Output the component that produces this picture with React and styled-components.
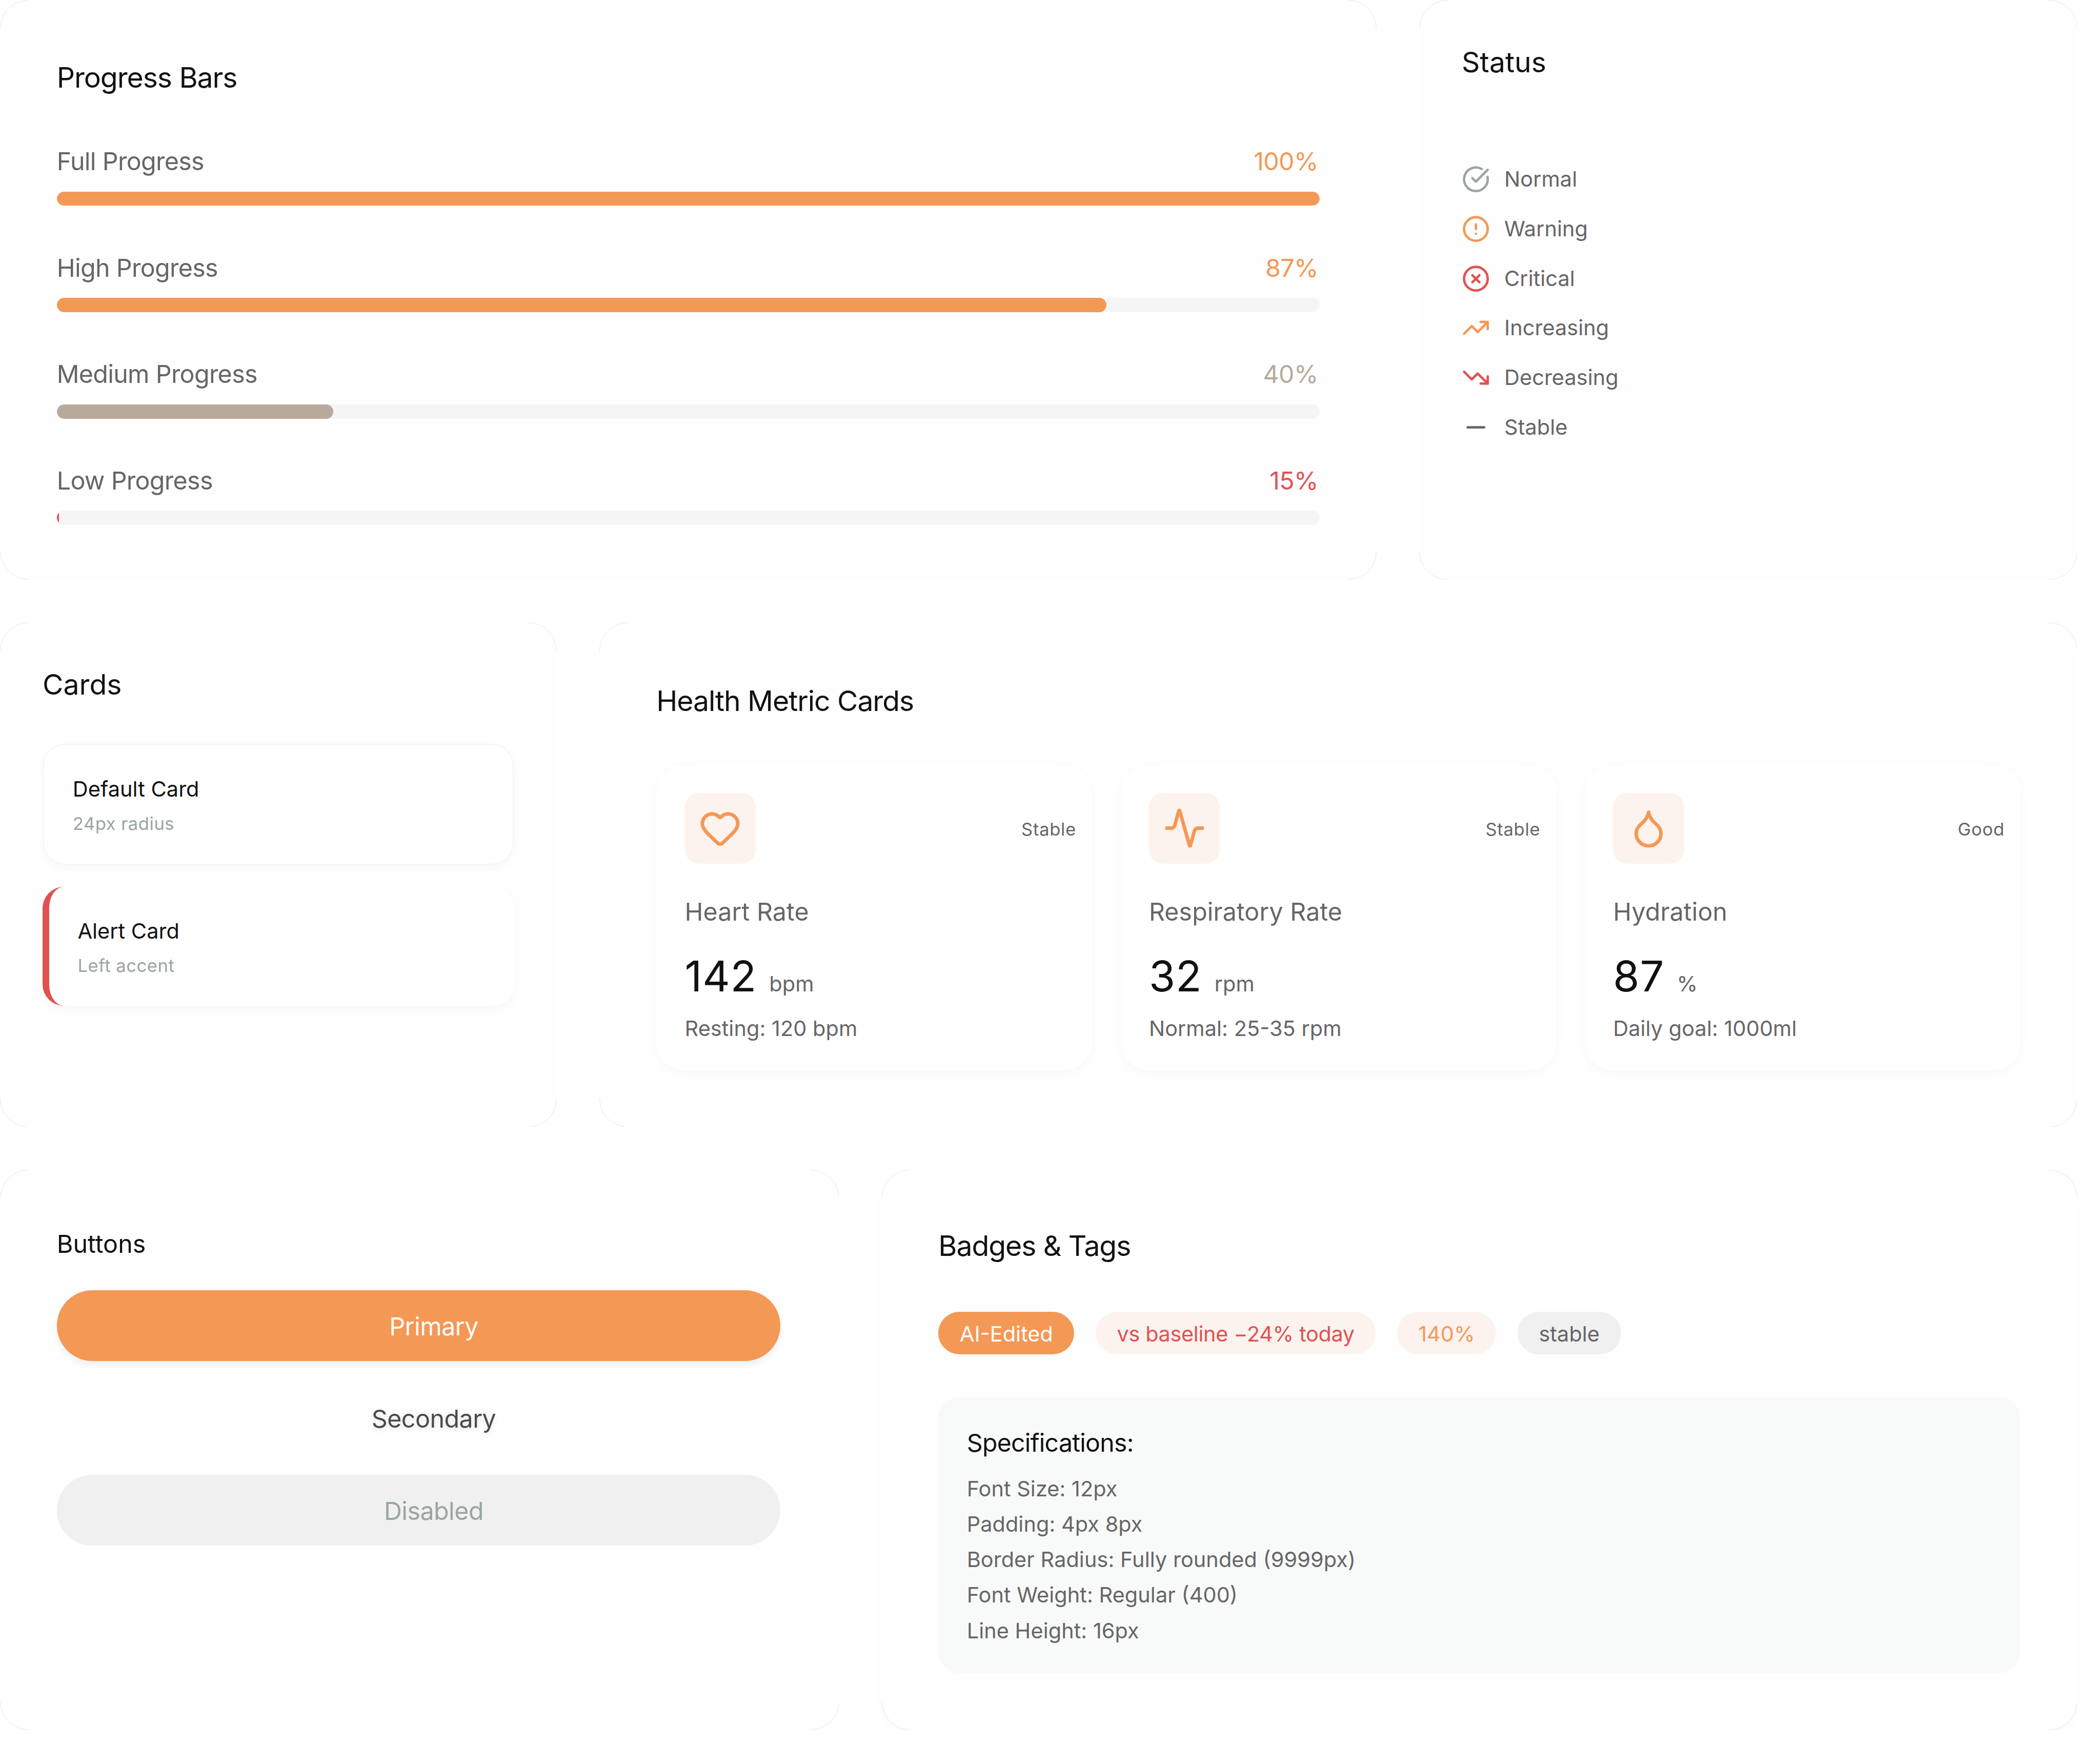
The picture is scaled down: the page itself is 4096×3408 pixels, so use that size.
import React from 'react';
import styled, { createGlobalStyle } from 'styled-components';
import {
  Activity,
  CircleAlert,
  CircleCheckBig,
  CircleX,
  Droplet,
  Heart,
  Minus,
  TrendingDown,
  TrendingUp,
} from 'lucide-react';

const ORANGE = '#f49856';
const RED = '#e05252';
const INK = '#111111';
const GREY = '#666666';
const SAGE = '#9aa5a0';
const PEACH = '#fdf3ee';

const GlobalStyle = createGlobalStyle`
  html, body {
    margin: 0;
    background: #ffffff;
    overflow: hidden;
  }
  #root {
    zoom: 3.46;
    font-family: 'Inter', 'Liberation Sans', sans-serif;
    color: ${INK};
  }
  * {
    box-sizing: border-box;
  }
`;

const Page = styled.div`
  width: 1171px;
  display: flex;
  flex-direction: column;
  gap: 24px;
`;

const Row = styled.div`
  display: grid;
  grid-template-columns: ${(p) => p.$cols};
  gap: 24px;
`;

const Panel = styled.section`
  position: relative;
  background: #fefefe;
  border-radius: 16px;
  padding: ${(p) => p.$padding || '32px'};

  /* hairline that only shows on the rounded corners */
  &::before {
    content: '';
    position: absolute;
    inset: 0;
    border: 0.3px solid rgba(0, 0, 0, 0.1);
    border-radius: inherit;
    pointer-events: none;
    -webkit-mask:
      linear-gradient(#000 0 0) top left / 16px 16px no-repeat,
      linear-gradient(#000 0 0) top right / 16px 16px no-repeat,
      linear-gradient(#000 0 0) bottom left / 16px 16px no-repeat,
      linear-gradient(#000 0 0) bottom right / 16px 16px no-repeat;
  }
`;

const ProgressPanel = styled(Panel)`
  padding-bottom: 31px;
`;

const RaisedPanel = styled(Panel)`
  box-shadow: 0 2px 6px rgba(0, 0, 0, 0.025);
`;

const Title = styled.h2`
  margin: 0 0 24px;
  font-size: 16px;
  line-height: 24px;
  font-weight: 400;
  color: ${INK};
  letter-spacing: ${(p) => (p.$tight ? '-0.02em' : '0')};
`;

const SnugTitle = styled(Title)`
  line-height: ${(p) => p.$lh || '22px'};
  margin-bottom: ${(p) => p.$after};
`;

const SmallTitle = styled(Title)`
  font-size: 14px;
  line-height: 20px;
  margin-bottom: 16px;
`;

/* progress bars */
const BarList = styled.div`
  display: flex;
  flex-direction: column;
  gap: 24px;
`;

const BarHead = styled.div`
  display: flex;
  justify-content: space-between;
  padding-top: 1px;
  margin-bottom: 7px;
  font-size: 14px;
  line-height: 20px;
  color: ${GREY};
  letter-spacing: -0.015em;
`;

const BarValue = styled.span`
  color: ${(p) => p.$color};
  padding-right: 1px;
`;

const Track = styled.div`
  height: 8px;
  border-radius: 9999px;
  background: #f4f5f4;
  overflow: hidden;
`;

const Fill = styled.div`
  height: 100%;
  border-radius: 9999px;
  background: ${(p) => p.$color};
`;

/* status list */
const StatusList = styled.ul`
  list-style: none;
  margin: 0;
  padding: 0;
  display: flex;
  flex-direction: column;
  gap: 8px;
`;

const StatusRow = styled.li`
  display: flex;
  align-items: center;
  gap: 8px;
  font-size: 12px;
  line-height: 20px;
  color: ${GREY};

  svg {
    flex: none;
    color: ${(p) => p.$color};
  }
`;

/* plain cards */
const CardStack = styled.div`
  display: flex;
  flex-direction: column;
  gap: 13px;
`;

const DemoCard = styled.div`
  margin: 0 1px;
  background: #ffffff;
  border-radius: 12px;
  padding: 17px 16px 14.5px;
  box-shadow: 0 0 0 0.6px #f5f6f5, 0 2px 6px rgba(0, 0, 0, 0.03);
`;

const AlertCard = styled(DemoCard)`
  margin: 0;
  border-left: 4px solid ${RED};
  box-shadow: 0 2px 6px rgba(0, 0, 0, 0.03);
`;

const CardName = styled.div`
  font-size: 12px;
  line-height: 16px;
  color: ${INK};
`;

const CardNote = styled.div`
  margin-top: 3.5px;
  font-size: 10px;
  line-height: 16px;
  color: ${SAGE};
  letter-spacing: 0.015em;
`;

/* metric cards */
const MetricGrid = styled.div`
  display: grid;
  grid-template-columns: repeat(3, 1fr);
  gap: 16px;
`;

const MetricCard = styled.article`
  background: #ffffff;
  border-radius: 16px;
  padding: 16px 16px 15.5px;
  box-shadow: 0 0 2px rgba(0, 0, 0, 0.012), 0 2px 7px rgba(0, 0, 0, 0.025);
`;

const MetricTop = styled.div`
  display: flex;
  align-items: center;
  justify-content: space-between;
  margin-bottom: 17px;
`;

const IconBox = styled.div`
  width: 40px;
  height: 40px;
  border-radius: 8px;
  background: ${PEACH};
  color: ${ORANGE};
  display: flex;
  align-items: center;
  justify-content: center;
`;

const MetricState = styled.span`
  margin-right: -7px;
  padding-top: 1px;
  font-size: 10px;
  line-height: 14px;
  color: ${GREY};
  letter-spacing: 0.02em;
`;

const MetricName = styled.div`
  font-size: 14px;
  line-height: 20px;
  color: ${GREY};
  margin-bottom: 8.5px;
`;

const MetricValue = styled.div`
  display: flex;
  align-items: baseline;
  gap: 7px;
  font-size: 24px;
  line-height: 36px;
  letter-spacing: 0.01em;
  color: ${INK};
  margin-bottom: 3.5px;
`;

const MetricUnit = styled.span`
  font-size: 12px;
  line-height: 12px;
  letter-spacing: 0;
  color: ${GREY};
`;

const MetricNote = styled.div`
  font-size: 12px;
  line-height: 16px;
  color: ${GREY};
`;

/* buttons */
const ButtonStack = styled.div`
  width: 408px;
  display: flex;
  flex-direction: column;
  gap: 12px;
`;

const Button = styled.button`
  height: 40px;
  border: 0;
  border-radius: 9999px;
  padding: 1px 0 0 17px;
  font-family: inherit;
  font-size: 14px;
  line-height: 20px;
  letter-spacing: -0.012em;
  text-align: center;
  background: transparent;
  color: #4a4a4a;
  text-shadow: 0 1px 3px rgba(0, 0, 0, 0.12);
`;

const PrimaryButton = styled(Button)`
  background: ${ORANGE};
  color: #ffffff;
  text-shadow: none;
  box-shadow: 0 2px 4px rgba(0, 0, 0, 0.06);
`;

const DisabledButton = styled(Button)`
  background: #f0f0f0;
  color: ${SAGE};
  text-shadow: none;
`;

/* badges */
const BadgeRow = styled.div`
  display: flex;
  gap: 12px;
  margin-bottom: 24px;
`;

const Badge = styled.span`
  height: 24px;
  padding: 0 12px;
  border-radius: 9999px;
  font-size: 12px;
  line-height: 25px;
  letter-spacing: ${(p) => (p.$tight ? '-0.01em' : '0')};
  background: ${(p) => p.$bg};
  color: ${(p) => p.$color};
`;

const SpecBox = styled.div`
  background: #f8faf9;
  border-radius: 12px;
  padding: 16px;
`;

const SpecTitle = styled.div`
  font-size: 14px;
  line-height: 20px;
  letter-spacing: -0.018em;
  color: ${INK};
  margin-bottom: 8px;
`;

const SpecList = styled.div`
  display: flex;
  flex-direction: column;
  gap: 4px;
  font-size: 12px;
  line-height: 16px;
  color: ${GREY};
`;

const bars = [
  { label: 'Full Progress', value: '100%', width: '100%', fill: ORANGE, text: ORANGE },
  { label: 'High Progress', value: '87%', width: '83.1%', fill: ORANGE, text: ORANGE },
  { label: 'Medium Progress', value: '40%', width: '21.9%', fill: '#b8a99a', text: '#b8a99a' },
  { label: 'Low Progress', value: '15%', width: '0.17%', fill: RED, text: RED },
];

const statuses = [
  { label: 'Normal', Icon: CircleCheckBig, color: SAGE },
  { label: 'Warning', Icon: CircleAlert, color: ORANGE },
  { label: 'Critical', Icon: CircleX, color: RED },
  { label: 'Increasing', Icon: TrendingUp, color: ORANGE },
  { label: 'Decreasing', Icon: TrendingDown, color: RED },
  { label: 'Stable', Icon: Minus, color: GREY },
];

const metrics = [
  { name: 'Heart Rate', state: 'Stable', value: '142', unit: 'bpm', note: 'Resting: 120 bpm', Icon: Heart },
  { name: 'Respiratory Rate', state: 'Stable', value: '32', unit: 'rpm', note: 'Normal: 25-35 rpm', Icon: Activity },
  { name: 'Hydration', state: 'Good', value: '87', unit: '%', note: 'Daily goal: 1000ml', Icon: Droplet },
];

const badges = [
  { label: 'AI-Edited', bg: ORANGE, color: '#ffffff' },
  { label: 'vs baseline \u221224% today', bg: PEACH, color: RED, tight: true },
  { label: '140%', bg: PEACH, color: ORANGE },
  { label: 'stable', bg: '#f0f0f0', color: GREY },
];

const specs = [
  'Font Size: 12px',
  'Padding: 4px 8px',
  'Border Radius: Fully rounded (9999px)',
  'Font Weight: Regular (400)',
  'Line Height: 16px',
];

export default function App() {
  return (
    <>
      <GlobalStyle />
      <Page>
        <Row $cols="776px 371px">
          <ProgressPanel>
            <SnugTitle $tight $lh="23px" $after="25px">Progress Bars</SnugTitle>
            <BarList>
              {bars.map((bar) => (
                <div key={bar.label}>
                  <BarHead>
                    <span>{bar.label}</span>
                    <BarValue $color={bar.text}>{bar.value}</BarValue>
                  </BarHead>
                  <Track>
                    <Fill $color={bar.fill} style={{ width: bar.width }} />
                  </Track>
                </div>
              ))}
            </BarList>
          </ProgressPanel>
          <Panel $padding="24px">
            <SnugTitle $after="45px">Status</SnugTitle>
            <StatusList>
              {statuses.map(({ label, Icon, color }) => (
                <StatusRow key={label} $color={color}>
                  <Icon size={16} />
                  {label}
                </StatusRow>
              ))}
            </StatusList>
          </Panel>
        </Row>

        <Row $cols="314px 833px">
          <Panel $padding="24px">
            <SnugTitle $after="23px">Cards</SnugTitle>
            <CardStack>
              <DemoCard>
                <CardName>Default Card</CardName>
                <CardNote>24px radius</CardNote>
              </DemoCard>
              <AlertCard>
                <CardName>Alert Card</CardName>
                <CardNote>Left accent</CardNote>
              </AlertCard>
            </CardStack>
          </Panel>
          <Panel>
            <Title $tight>Health Metric Cards</Title>
            <MetricGrid>
              {metrics.map(({ name, state, value, unit, note, Icon }) => (
                <MetricCard key={name}>
                  <MetricTop>
                    <IconBox>
                      <Icon size={24} />
                    </IconBox>
                    <MetricState>{state}</MetricState>
                  </MetricTop>
                  <MetricName>{name}</MetricName>
                  <MetricValue>
                    {value}
                    <MetricUnit>{unit}</MetricUnit>
                  </MetricValue>
                  <MetricNote>{note}</MetricNote>
                </MetricCard>
              ))}
            </MetricGrid>
          </Panel>
        </Row>

        <Row $cols="473px 674px">
          <Panel>
            <SmallTitle>Buttons</SmallTitle>
            <ButtonStack>
              <PrimaryButton>Primary</PrimaryButton>
              <Button>Secondary</Button>
              <DisabledButton disabled>Disabled</DisabledButton>
            </ButtonStack>
          </Panel>
          <RaisedPanel>
            <SnugTitle $tight $after="26px">Badges &amp; Tags</SnugTitle>
            <BadgeRow>
              {badges.map((badge) => (
                <Badge key={badge.label} $bg={badge.bg} $color={badge.color} $tight={badge.tight}>
                  {badge.label}
                </Badge>
              ))}
            </BadgeRow>
            <SpecBox>
              <SpecTitle>Specifications:</SpecTitle>
              <SpecList>
                {specs.map((line) => (
                  <div key={line}>{line}</div>
                ))}
              </SpecList>
            </SpecBox>
          </RaisedPanel>
        </Row>
      </Page>
    </>
  );
}
